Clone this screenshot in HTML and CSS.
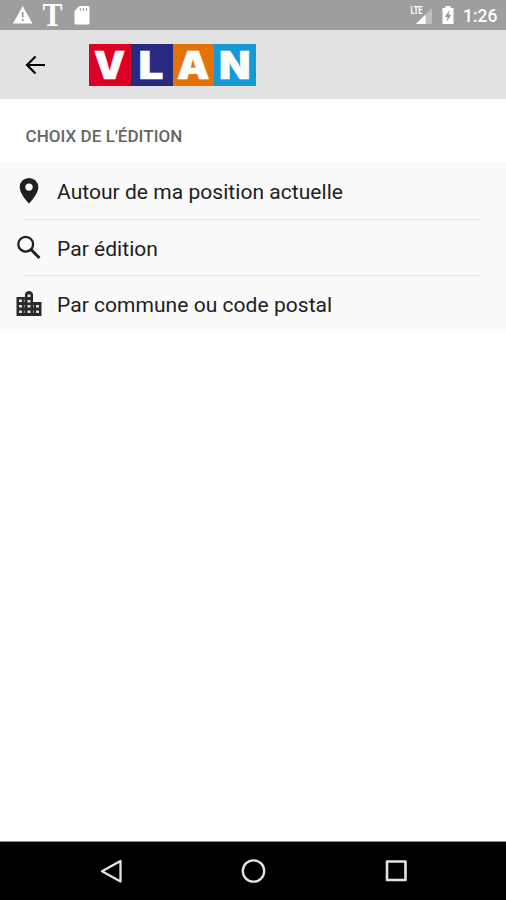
FILE: index.html
```html
<!DOCTYPE html>
<html lang="fr">
<head>
<meta charset="utf-8">
<title>Vlan</title>
<link rel="stylesheet" href="styles.css">
</head>
<body>
<div class="screen">
  <div class="status">
    <svg class="status-left" width="100" height="30" viewBox="0 0 100 30">
      <path d="M22.7 6 32.5 23.5H13Z" fill="#fff"/>
      <path d="M22.7 12v5.500M22.700 19v2" stroke="#999" stroke-width="1.700"/>
      <text class="tee" x="42.500" y="26" textLength="20" lengthAdjust="spacingAndGlyphs">T</text>
      <path d="M79.500 6H88q1.500 0 1.500 1.500v15.500q0 1.500-1.500 1.500H76q-1.500 0-1.500-1.500V11Z" fill="#fff"/>
      <path d="M80.500 8v3M83.500 8v3M86.500 8v3" stroke="#aaa" stroke-width="1.300"/>
    </svg>
    <svg class="status-right" width="52" height="30" viewBox="408 0 52 30">
      <path d="M432 8V24H416Z" fill="#bdbdbd"/>
      <path d="M425.500 14.500V24H416Z" fill="#fff"/>
      <text class="lte" x="410.500" y="14" textLength="12" lengthAdjust="spacingAndGlyphs">LTE</text>
      <path d="M442.500 8h3V6h5v2h3v16h-11Z" fill="#fff"/>
      <path d="M449.500 10 444.700 17H447.500L446.500 22 451.300 14.700H448.500Z" fill="#999"/>
    </svg>
    <span class="clock">1:26</span>
  </div>
  <header class="bar">
    <svg class="back" width="24" height="24" viewBox="0 0 24 24"><path d="M22 12H4M12.500 3.500 4 12 12.500 20.500" fill="none" stroke="#000" stroke-width="2.200"/></svg>
    <svg class="logo" width="167" height="42" viewBox="0 0 167 42">
      <path fill="#dc0023" d="M0 0h42v42H0z"/>
      <path fill="#272a83" d="M42 0h42v42H42z"/>
      <path fill="#e3720b" d="M84 0h41v42H84z"/>
      <path fill="#1698d6" d="M125 0h42v42h-42z"/>
      <text x="4.800" y="34.800" textLength="31.500" lengthAdjust="spacingAndGlyphs">V</text>
      <text x="49.500" y="34.800" textLength="25" lengthAdjust="spacingAndGlyphs">L</text>
      <text x="88" y="34.800" textLength="32.500" lengthAdjust="spacingAndGlyphs">A</text>
      <text x="130" y="34.800" textLength="31.500" lengthAdjust="spacingAndGlyphs">N</text>
    </svg>
  </header>
  <h1 class="heading">CHOIX DE L'ÉDITION</h1>
  <ul class="list">
    <li class="row">
      <svg class="icon" width="28" height="28" viewBox="0 0 28 28"><path fill="#202020" fill-rule="evenodd" d="M14 .900a9.300 9.300 0 0 0-9.300 9.300C4.700 17 14 26.500 14 26.500S23.300 17 23.300 10.200A9.300 9.300 0 0 0 14 .900ZM14 6.400a3.700 3.700 0 1 1 0 7.400 3.700 3.700 0 0 1 0-7.400Z"/></svg>
      <span class="label">Autour de ma position actuelle</span>
    </li>
    <li class="row">
      <svg class="icon" width="28" height="28" viewBox="0 0 28 28"><circle cx="10.700" cy="10.200" r="7.400" fill="none" stroke="#202020" stroke-width="2.300"/><path d="m16 15.500 8.500 8.500" stroke="#202020" stroke-width="2.900"/></svg>
      <span class="label">Par édition</span>
    </li>
    <li class="row">
      <svg class="icon" width="28" height="28" viewBox="0 0 28 28"><path fill="#292929" d="M1.500 7H10V4.500Q10.500 1 14 1T18 4.500V12H26.500V26H1.500Z"/><path fill="#ddd" d="M4 9.500h3v2.500H4zM4 15h3v2.500H4zM4 20.500h3v2.500H4zM12.500 4.500h3v2.500h-3zM12.500 10h3v2.500h-3zM12.500 15h3v2.500h-3zM12.500 20.500h3v2.500h-3zM21 15h3v2.500h-3zM21 20.500h3v2.500h-3z"/><path fill="#999" d="M8.800 9.500h1v2.500h-1zM8.800 15h1v2.500h-1zM8.800 20.500h1v2.500h-1zM18 15h1v2.500h-1zM18 20.500h1v2.500h-1z"/></svg>
      <span class="label">Par commune ou code postal</span>
    </li>
  </ul>
  <nav class="nav">
    <svg width="506" height="58" viewBox="0 842 506 58" fill="none" stroke="#e4e4e4" stroke-width="2.300" stroke-linejoin="round">
      <path d="M120.500 861v20.500L102 871.200Z"/>
      <circle cx="253.500" cy="871" r="10.700"/>
      <path d="M387 861.500h18.500V880H387Z" stroke-width="2.600"/>
    </svg>
  </nav>
</div>
</body>
</html>
```
FILE: styles.css
```css
* { box-sizing: border-box; }
body { margin: 0; background: #fff; font-family: Roboto, "Liberation Sans", sans-serif; }
svg { display: block; flex: none; overflow: visible; }
.screen { display: flex; flex-direction: column; width: 506px; height: 900px; overflow: hidden; }
.status { display: flex; flex: none; height: 30px; background: #9e9e9e; }
.status-right { margin-left: 308px; }
.tee { font: bold 33px "Liberation Serif", serif; fill: #fff; }
.lte { font: 700 10px Roboto, sans-serif; fill: #fff; }
.clock { margin-left: 3px; font-size: 17.5px; font-weight: 500; line-height: 32px; color: #fff; white-space: nowrap; }
.bar { display: flex; flex: none; height: 69px; padding: 14px 0 0 23px; background: #e2e2e2; }
.back { margin-top: 8.5px; }
.logo { margin-left: 42px; }
.logo text { font: 900 38.5px Inter, sans-serif; fill: #fff; stroke: #fff; stroke-width: .5px; }
.heading { flex: none; height: 63px; margin: 0; padding: 6px 0 0 25.5px; font-size: 17px; font-weight: 500; line-height: 63px; letter-spacing: .05px; color: #666; white-space: nowrap; }
.list { flex: none; height: 170px; margin: 0; padding: 1px 0 0; background: #fafafa; list-style: none; }
.row { display: flex; align-items: center; height: 56.5px; padding-left: 14.5px; background: linear-gradient(#e5e5e5, #e5e5e5) 25px 100% / 456px 1px no-repeat; }
.row:last-child { background: none; }
.label { margin-left: 14.5px; padding-top: 2px; font-size: 21px; line-height: 28px; letter-spacing: .04px; color: #202020; white-space: nowrap; }
.nav { margin-top: auto; height: 59px; border-top: 1px solid #888; background: #000; }
```
